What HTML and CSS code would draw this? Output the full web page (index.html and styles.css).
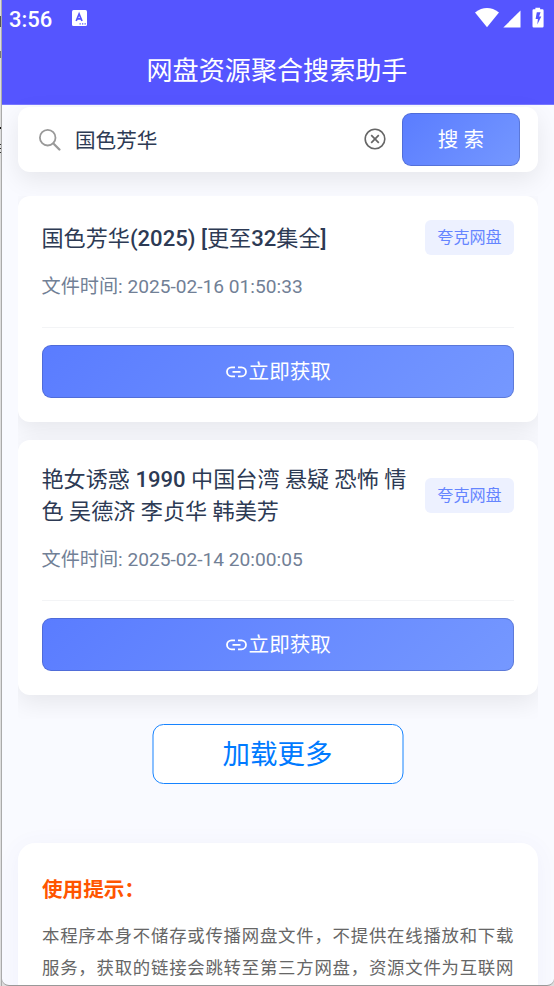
FILE: index.html
```html
<!DOCTYPE html>
<html lang="zh-CN">
<head>
<meta charset="utf-8">
<title>网盘资源聚合搜索助手</title>
<link rel="stylesheet" href="styles.css">
</head>
<body>
<div class="window">
  <div class="gutter"></div>
  <div class="screen">
    <header class="header">
      <div class="status">
        <span class="clock">3:56</span>
        <svg class="ime" width="15" height="16" viewBox="0 0 15 16"><rect width="15" height="16" rx="1.5" fill="#fff"/><path d="M4.2 11 7.1 4 10 11M5.2 8.800h3.800" fill="none" stroke="#5555ff" stroke-width="1.700"/><path d="M7.500 13.800h1.300M10 13.800h1.300M12.500 13.800h1.300" stroke="#5555ff" stroke-width="1.200"/></svg>
        <svg class="signals" width="70" height="22" viewBox="0 0 70 22" fill="#fff"><path d="M0 5.400Q12 -3.300 24 5.400L12 20.300Z"/><path d="M45.500 3.500V20.500H28.300Z"/><path d="M60.400.800h4.700v1.500h2.300q1.200 0 1.200 1.200v15.800q0 1.200-1.200 1.200h-8.700q-1.200 0-1.200-1.200V3.500q0-1.200 1.200-1.200h1.700Z"/><path d="M61.800 5.200h3.800l-1.500 4.400h2.200l-4 8 .600-5.600h-2.300Z" fill="#5555ff"/></svg>
      </div>
      <h1 class="title">网盘资源聚合搜索助手</h1>
    </header>
    <main class="content">
      <section class="search">
        <svg class="magnifier" width="22" height="22" viewBox="0 0 22 22" fill="none" stroke="#999"><circle cx="8.700" cy="8.700" r="7.800" stroke-width="1.800"/><path d="m14.400 14.500 6 6" stroke-width="2.300" stroke-linecap="round"/></svg>
        <span class="query">国色芳华</span>
        <svg class="clear" width="22" height="22" viewBox="0 0 22 22" fill="none" stroke="#666"><circle cx="11" cy="11" r="9.800" stroke-width="1.600"/><path d="m7.200 7.200 7.600 7.600m0-7.600-7.600 7.600" stroke-width="1.700"/></svg>
        <button class="btn search-btn">搜 索</button>
      </section>
      <div class="results">
        <article class="card">
          <div class="card-head"><h2 class="name">国色芳华<b>(2025) [</b>更至<b>32</b>集全<b>]</b></h2><span class="tag">夸克网盘</span></div>
          <p class="time">文件时间: 2025-02-16 01:50:33</p>
          <div class="actions"><button class="btn get"><svg width="21" height="12" viewBox="0 0 21 12" fill="none" stroke="#fff" stroke-width="1.800"><path d="M9 1.300H5.500a4.500 4.500 0 0 0 0 9H9M12 1.300h3.500a4.500 4.500 0 0 1 0 9H12M6.500 5.800h8"/></svg>立即获取</button></div>
        </article>
        <article class="card">
          <div class="card-head"><h2 class="name"><span>艳女诱惑</span> <b>1990</b> <span>中国台湾 悬疑 恐怖 情</span><br><span>色 吴德济 李贞华 韩美芳</span></h2><span class="tag">夸克网盘</span></div>
          <p class="time">文件时间: 2025-02-14 20:00:05</p>
          <div class="actions"><button class="btn get"><svg width="21" height="12" viewBox="0 0 21 12" fill="none" stroke="#fff" stroke-width="1.800"><path d="M9 1.300H5.500a4.500 4.500 0 0 0 0 9H9M12 1.300h3.500a4.500 4.500 0 0 1 0 9H12M6.500 5.800h8"/></svg>立即获取</button></div>
        </article>
      </div>
      <button class="more">加载更多</button>
      <section class="tips">
        <h3 class="tips-title">使用提示：</h3>
        <p class="tips-text">本程序本身不储存或传播网盘文件，不提供在线播放和下载<br>服务，获取的链接会跳转至第三方网盘，资源文件为互联网</p>
      </section>
    </main>
  </div>
</div>
</body>
</html>
```
FILE: styles.css
```css
* { box-sizing: border-box; margin: 0; padding: 0; }
body { font-family: Roboto, "Noto Sans CJK SC", sans-serif; background: #999; overflow: hidden; }
.window { display: flex; width: 554px; height: 986px; background: #ddd; }
.gutter {
  width: 2px;
  border-right: 1px solid #aaa;
  background: linear-gradient(#ddd 16px, #555 16px 27px, #ddd 27px 51px, #777 51px 58px, #ddd 58px 127px, #111 127px 129px, #ddd 129px 144px, #333 144px 145px, #ddd 145px 148px, #333 148px 149px, #ddd 149px 152px, #333 152px 153px, #ddd 153px);
}
.screen { flex: 1; height: 986px; overflow: hidden; background: #f9faff; border-bottom: 1px solid #999; border-radius: 0 0 7px 7px; }
.header { height: 105px; background: #5555ff; color: #fff; border-bottom: 1px solid #7777ff; }
.status { display: flex; align-items: center; height: 37px; padding: 0 9px 0 7px; }
.clock { font-size: 22px; font-weight: 500; line-height: 37px; padding-top: 2px; }
.ime { margin: 0 0 1px 20px; }
.signals { margin: 0 0 1px auto; }
.title { font-size: 26.1px; font-weight: 400; line-height: 38px; text-align: center; padding: 15px 2px 0 0; }
.content { padding: 2px 16px 0; }
.search { display: flex; align-items: center; height: 65px; padding: 0 18px 0 21px; border-radius: 12px; background: #fff; box-shadow: 0 8px 24px rgba(0, 0, 0, .08); }
.query { margin-left: 14px; flex: 1; font-size: 20.6px; line-height: 30px; padding-top: 2px; color: #2d3a54; }
.clear { margin: 0 16px 1px 0; }
.btn { display: flex; align-items: center; justify-content: center; color: #fff; font-family: inherit; border: 1px solid rgba(60, 80, 160, .4); border-radius: 9px; background: linear-gradient(135deg, #5a7cff, #7598ff) border-box; }
.search-btn { width: 118px; height: 53px; font-size: 20.6px; padding-bottom: 4px; }
/* Card shadows are cut at the sides of the list. */
.results { display: flex; flex-direction: column; gap: 18px; margin: 24px 0 -24px; padding-bottom: 24px; overflow: hidden; }
.card { padding: 24px 24px 24px 23.500px; border-radius: 12px; background: #fff; box-shadow: 0 8px 24px rgba(0, 0, 0, .08); }
.card-head { display: flex; align-items: center; justify-content: space-between; }
.name { width: 372px; font-size: 22.1px; line-height: 32px; font-weight: 400; color: #2d3a54; }
.name b { font-weight: 500; }
.card + .card .name { margin-top: -1px; }
.tag { width: 89px; height: 35px; flex: none; border-radius: 6px; background: #edf1ff; color: #6585ff; font-size: 16.1px; line-height: 35px; text-align: center; }
.time { margin-top: 17px; font-size: 19.15px; line-height: 30px; color: #718096; }
.card + .card .time { margin-top: 18px; }
.actions { margin-top: 25px; padding-top: 17px; border-top: 1px solid #f3f4f6; }
.get { width: 100%; height: 53px; gap: 2px; font-size: 20.6px; padding: 0 0 3px 1px; }
.get svg { margin-top: 3px; }
.more { display: block; width: 251px; height: 60px; margin: 29px auto 59px; padding: 0 0 5px; transform: translateX(-.5px); border: 1px solid #1683ff; border-radius: 11px; background: #fff; color: #007aff; font-family: inherit; font-size: 27.5px; }
.tips { height: 200px; padding: 31px 24px; border-radius: 17px; background: #fff; box-shadow: 0 4px 24px rgba(80, 80, 180, .06); }
.tips-title { color: #ff5500; font-size: 20.6px; line-height: 32px; font-weight: 700; }
.tips-text { margin-top: 15px; width: 480px; color: #666; font-size: 17.4px; letter-spacing: .77px; line-height: 31.500px; white-space: nowrap; }
```
